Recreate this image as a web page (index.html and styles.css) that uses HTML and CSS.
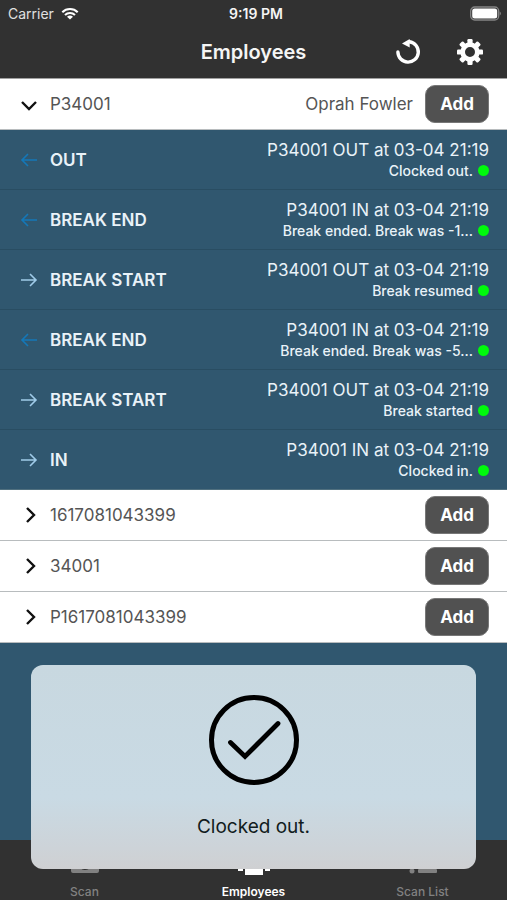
FILE: index.html
```html
<!DOCTYPE html>
<html lang="en">
<head>
<meta charset="utf-8">
<meta name="viewport" content="width=device-width, initial-scale=1">
<title>Employees</title>
<link rel="stylesheet" href="styles.css">
</head>
<body>
<svg class="sprite" aria-hidden="true">
  <symbol id="right" viewBox="0 0 18 16"><path d="M1 8h15M10 2l6 6-6 6"/></symbol>
  <symbol id="left" viewBox="0 0 18 16"><path d="M17 8H2M8 2L2 8l6 6"/></symbol>
  <symbol id="chevron" viewBox="0 0 18 18"><path d="M7 2l7 7-7 7"/></symbol>
</svg>
<div class="app">
  <header class="top">
    <div class="status">
      <div class="carrier">Carrier
        <svg class="wifi" viewBox="0 0 18 13"><path d="M1.300 5.200a11 11 0 0 1 15.400 0M4 8a7.200 7.200 0 0 1 10 0" fill="none" stroke="#fff" stroke-width="2.100"/><path d="M9 12.500L6 9.800a4.400 4.400 0 0 1 6 0z" fill="#fff"/></svg>
      </div>
      <div class="time">9:19 PM</div>
      <div class="power">
        <svg class="battery" viewBox="0 0 32 15"><rect x="1.700" y="1" width="28" height="13" rx="4" fill="none" stroke="#858585" stroke-width="1.300"/><rect x="3.200" y="2.500" width="25" height="10" rx="2.500" fill="#fff"/><path d="M30.700 5.500a2.300 2.300 0 0 1 0 4z" fill="#858585"/></svg>
      </div>
    </div>
    <div class="nav">
      <h1>Employees</h1>
      <div class="tools">
        <button type="button" aria-label="Refresh"><svg viewBox="0 0 26 26"><path d="M2.900 13a10.200 10.200 0 1 0 11.600-10.200" fill="none" stroke="#fff" stroke-width="3.400" stroke-linecap="round"/><path d="M7 4.600L14.700 0v8.600z" fill="#fff"/></svg></button>
        <button type="button" aria-label="Settings"><svg viewBox="0 0 26 26"><g fill="#fff"><path fill-rule="evenodd" d="M13 3.300a9.700 9.700 0 1 0 0 19.400a9.700 9.700 0 1 0 0-19.400zM13 8a5 5 0 1 1 0 10a5 5 0 1 1 0-10z"/><g id="teeth"><rect x="10.400" y="0" width="5.200" height="5" rx="1.200"/><rect x="10.400" y="21" width="5.200" height="5" rx="1.200"/><rect x="0" y="10.400" width="5" height="5.200" rx="1.200"/><rect x="21" y="10.400" width="5" height="5.200" rx="1.200"/></g><use href="#teeth" transform="rotate(45 13 13)"/></g></svg></button>
      </div>
    </div>
  </header>

  <main>
    <section>
      <div class="row">
        <button class="toggle open" type="button" aria-expanded="true"><svg class="chevron"><use href="#chevron"/></svg>P34001</button>
        <span class="name">Oprah Fowler</span>
        <button class="add" type="button">Add</button>
      </div>
      <ul class="log">
        <li><svg class="arrow back"><use href="#left"/></svg><strong>OUT</strong><div class="entry"><p>P34001 OUT at 03-04 21:19</p><p class="note"><span>Clocked out.</span><i class="dot"></i></p></div></li>
        <li><svg class="arrow back"><use href="#left"/></svg><strong>BREAK END</strong><div class="entry"><p>P34001 IN at 03-04 21:19</p><p class="note"><span>Break ended. Break was -1...</span><i class="dot"></i></p></div></li>
        <li><svg class="arrow"><use href="#right"/></svg><strong>BREAK START</strong><div class="entry"><p>P34001 OUT at 03-04 21:19</p><p class="note"><span>Break resumed</span><i class="dot"></i></p></div></li>
        <li><svg class="arrow back"><use href="#left"/></svg><strong>BREAK END</strong><div class="entry"><p>P34001 IN at 03-04 21:19</p><p class="note"><span>Break ended. Break was -5...</span><i class="dot"></i></p></div></li>
        <li><svg class="arrow"><use href="#right"/></svg><strong>BREAK START</strong><div class="entry"><p>P34001 OUT at 03-04 21:19</p><p class="note"><span>Break started</span><i class="dot"></i></p></div></li>
        <li><svg class="arrow"><use href="#right"/></svg><strong>IN</strong><div class="entry"><p>P34001 IN at 03-04 21:19</p><p class="note"><span>Clocked in.</span><i class="dot"></i></p></div></li>
      </ul>
    </section>
    <div class="row"><button class="toggle" type="button" aria-expanded="false"><svg class="chevron"><use href="#chevron"/></svg>1617081043399</button><button class="add" type="button">Add</button></div>
    <div class="row"><button class="toggle" type="button" aria-expanded="false"><svg class="chevron"><use href="#chevron"/></svg>34001</button><button class="add" type="button">Add</button></div>
    <div class="row"><button class="toggle" type="button" aria-expanded="false"><svg class="chevron"><use href="#chevron"/></svg>P1617081043399</button><button class="add" type="button">Add</button></div>
  </main>

  <nav class="tabs">
    <a href="#scan"><svg viewBox="0 0 32 28"><path fill-rule="evenodd" d="M4 3h6l2-3h8l2 3h6a2 2 0 0 1 2 2v16a2 2 0 0 1-2 2H4a2 2 0 0 1-2-2V5a2 2 0 0 1 2-2zM16 6a7 7 0 1 0 0 14a7 7 0 1 0 0-14z"/></svg>Scan</a>
    <a class="active" href="#employees" aria-current="page"><svg viewBox="0 0 32 28"><circle cx="16" cy="7" r="5"/><path d="M7 25V18q0-5 9-5t9 5v7zM0 21v-5q0-3 5-3v8zM32 21v-5q0-3-5-3v8z"/></svg>Employees</a>
    <a href="#list"><svg viewBox="0 0 32 28"><circle cx="5" cy="5" r="2.500"/><circle cx="5" cy="13" r="2.500"/><circle cx="5" cy="21" r="2.500"/><rect x="11" y="3" width="19" height="4" rx="1"/><rect x="11" y="11" width="19" height="4" rx="1"/><rect x="11" y="19" width="19" height="4" rx="1"/></svg>Scan List</a>
  </nav>

  <div class="toast" role="status">
    <svg viewBox="0 0 90 90"><circle cx="45" cy="45" r="42.500" stroke-width="5"/><path d="M21.500 47.500L36 61.500 69 28.500" stroke-width="4.800" stroke-linecap="round"/></svg>
    <p>Clocked out.</p>
  </div>
</div>
</body>
</html>
```
FILE: styles.css
```css
* { box-sizing: border-box; }
body, h1, p, ul { margin: 0; padding: 0; }
body { font-family: Inter, "Liberation Sans", sans-serif; background: #30576f; }
button { font: inherit; border: 0; padding: 0; background: none; color: inherit; cursor: pointer; }
svg { display: block; flex: none; }
.sprite { position: absolute; width: 0; height: 0; }

.app { min-height: 100vh; display: flex; flex-direction: column; position: relative; }

.top { background: #313131; color: #f5f5f5; border-bottom: 1px solid #a0a0a0; }
.status {
  display: grid; grid-template-columns: 1fr auto 1fr; align-items: center;
  height: 27px; padding: 0 8px; font-size: 14px; line-height: 16px;
}
.carrier { display: flex; align-items: center; gap: 7px; color: #e0e0e0; }
.wifi { width: 18px; height: 13px; }
.time { font-weight: 600; padding-left: 5px; }
.power { display: flex; justify-content: flex-end; margin-right: -2px; }
.battery { width: 32px; height: 15px; }
.nav {
  display: grid; grid-template-columns: 1fr auto 1fr; align-items: center;
  height: 51px; padding: 0 24px 2px;
}
.nav h1 { grid-column: 2; font-size: 20px; line-height: 24px; font-weight: 600; }
.tools { display: flex; justify-content: flex-end; gap: 36px; }
.tools svg { width: 26px; height: 26px; }

.row {
  display: flex; align-items: center; gap: 12px;
  height: 51px; padding: 0 18px 0 20px;
  background: #fff; color: #555; border-bottom: 1px solid #b8bcbe;
  font-size: 17px;
}
.toggle { display: flex; align-items: center; gap: 12px; margin-right: auto; }
.chevron { width: 18px; height: 18px; fill: none; stroke: #111; stroke-width: 2.4; }
.open .chevron { transform: rotate(90deg); }
.add {
  width: 64px; height: 38px; border-radius: 10px;
  background: #515151; color: #fff; font-weight: 700; border: 1px solid #777;
}

.log { list-style: none; color: #e9f2f8; }
.log li {
  display: flex; align-items: center; gap: 12px;
  height: 60px; padding: 0 18px 0 20px; border-bottom: 1px solid #294d62;
}
.log li:last-child { border-bottom-color: #50707f; }
.arrow { width: 18px; height: 16px; fill: none; stroke: #9fcbe8; stroke-width: 1.6; }
.back { stroke: #1478b8; }
.log strong { font-size: 17px; font-weight: 600; }
.entry { margin-left: auto; text-align: right; font-size: 17px; line-height: 22px; }
.note {
  display: flex; align-items: center; justify-content: flex-end; gap: 5px;
  font-size: 14px; line-height: 20px; font-weight: 500;
}
.dot { width: 11px; height: 11px; border-radius: 50%; background: #00fa0c; }

.tabs {
  margin-top: auto; height: 60px; background: #313131;
  display: grid; grid-template-columns: repeat(3, 1fr);
}
.tabs a {
  display: flex; flex-direction: column; align-items: center; justify-content: flex-end; gap: 6px;
  color: #818181; fill: currentColor; text-decoration: none;
  font-size: 12px; line-height: 16px; font-weight: 500;
}
.tabs svg { width: 32px; height: 28px; }
.tabs .active { color: #fff; font-weight: 600; }

.toast {
  position: absolute; left: 31px; right: 31px; bottom: 31px; height: 204px;
  padding-top: 30px; border-radius: 12px; color: #111b20;
  background: linear-gradient(#c8d8e0, #c9dae4 65%, #cdd3d8 90%, #cfd0d2);
  display: flex; flex-direction: column; align-items: center; gap: 30px;
}
.toast svg { width: 90px; height: 90px; fill: none; stroke: #000; }
.toast p { font-size: 19px; line-height: 24px; }
```
